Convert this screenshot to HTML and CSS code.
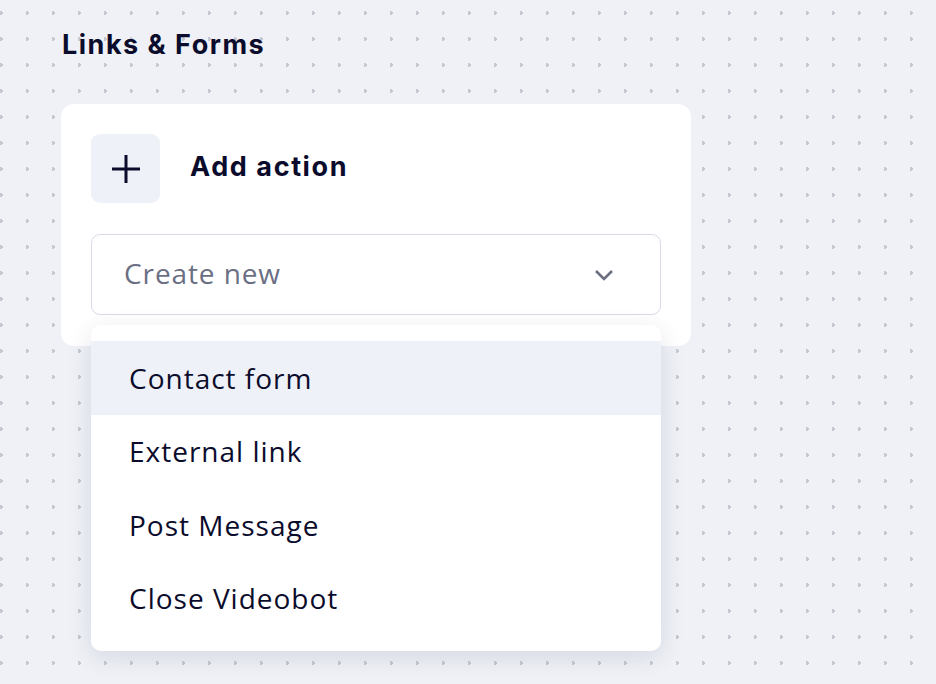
FILE: index.html
```html
<!DOCTYPE html>
<html lang="en">
  <head>
    <meta charset="UTF-8" />
    <meta name="viewport" content="width=device-width, initial-scale=1.0" />
    <title>Links &amp; Forms</title>
    <link rel="stylesheet" href="styles.css">
  </head>
  <body>
    <div class="page">
      <h2 class="section_title">Links &amp; Forms</h2>
      <div class="card">
        <div class="card_head">
          <div class="add_icon">
            <svg width="30" height="30" viewBox="0 0 30 30">
              <path d="M15 1v28M1 15h28" stroke="#0b0c2c" stroke-width="3" fill="none"/>
            </svg>
          </div>
          <span class="card_title">Add action</span>
        </div>
        <div class="select_wrap">
          <div class="select">
            <span class="placeholder">Create new</span>
            <svg class="chevron" width="20" height="12" viewBox="0 0 20 12">
              <path d="M2 2l8 8 8-8" stroke="#6b6f80" stroke-width="2.6" fill="none"/>
            </svg>
          </div>
          <ul class="menu">
            <li class="active">Contact form</li>
            <li>External link</li>
            <li>Post Message</li>
            <li>Close Videobot</li>
          </ul>
        </div>
      </div>
    </div>
  </body>
</html>
```

FILE: styles.css
```css
* {
  padding: 0;
  margin: 0;
  box-sizing: border-box;
}
body {
  width: 936px;
  height: 684px;
  overflow: hidden;
  background-color: #eff1f6;
  background-image: radial-gradient(circle at 1px 13px, #c5c9d3 1.7px, transparent 1.8px);
  background-size: 26px 26px;
  font-family: "Open Sans", "Noto Sans", sans-serif;
  color: #0b0c2c;
}
.page {
  padding: 28px 0 0 61px;
}
.section_title {
  font-family: Inter, "Liberation Sans", sans-serif;
  font-size: 27px;
  font-weight: 700;
  letter-spacing: 1.5px;
  line-height: 34px;
  padding-left: 1px;
  margin-bottom: 42px;
}
.card {
  width: 630px;
  height: 242px;
  background: #fff;
  border-radius: 13px;
  padding: 30px;
}
.card_head {
  display: flex;
  align-items: center;
  gap: 30px;
}
.add_icon {
  width: 69px;
  height: 69px;
  border-radius: 9px;
  background: #eef1f7;
  display: flex;
  justify-content: center;
  align-items: center;
}
.card_title {
  font-family: Inter, "Liberation Sans", sans-serif;
  font-size: 27px;
  font-weight: 700;
  letter-spacing: 1.6px;
  margin-top: -4px;
}
.select_wrap {
  position: relative;
  margin-top: 31px;
}
.select {
  height: 81px;
  border: 1.5px solid #d7dbe8;
  border-radius: 9px;
  display: flex;
  align-items: center;
  justify-content: space-between;
  padding: 0 46px 0 32px;
}
.placeholder {
  font-size: 28px;
  letter-spacing: 0.9px;
  color: #6b6f84;
  margin-top: -3px;
}
.menu {
  position: absolute;
  top: 91px;
  left: 0;
  right: 0;
  list-style: none;
  background: #fff;
  border-radius: 10px;
  padding: 16px 0;
  box-shadow: 0 6px 24px rgba(30, 40, 80, 0.12);
}
.menu li {
  height: 73.5px;
  display: flex;
  align-items: center;
  padding-left: 38px;
  font-size: 28px;
  letter-spacing: 1px;
}
.menu li.active {
  background: #eef1f7;
}
```
